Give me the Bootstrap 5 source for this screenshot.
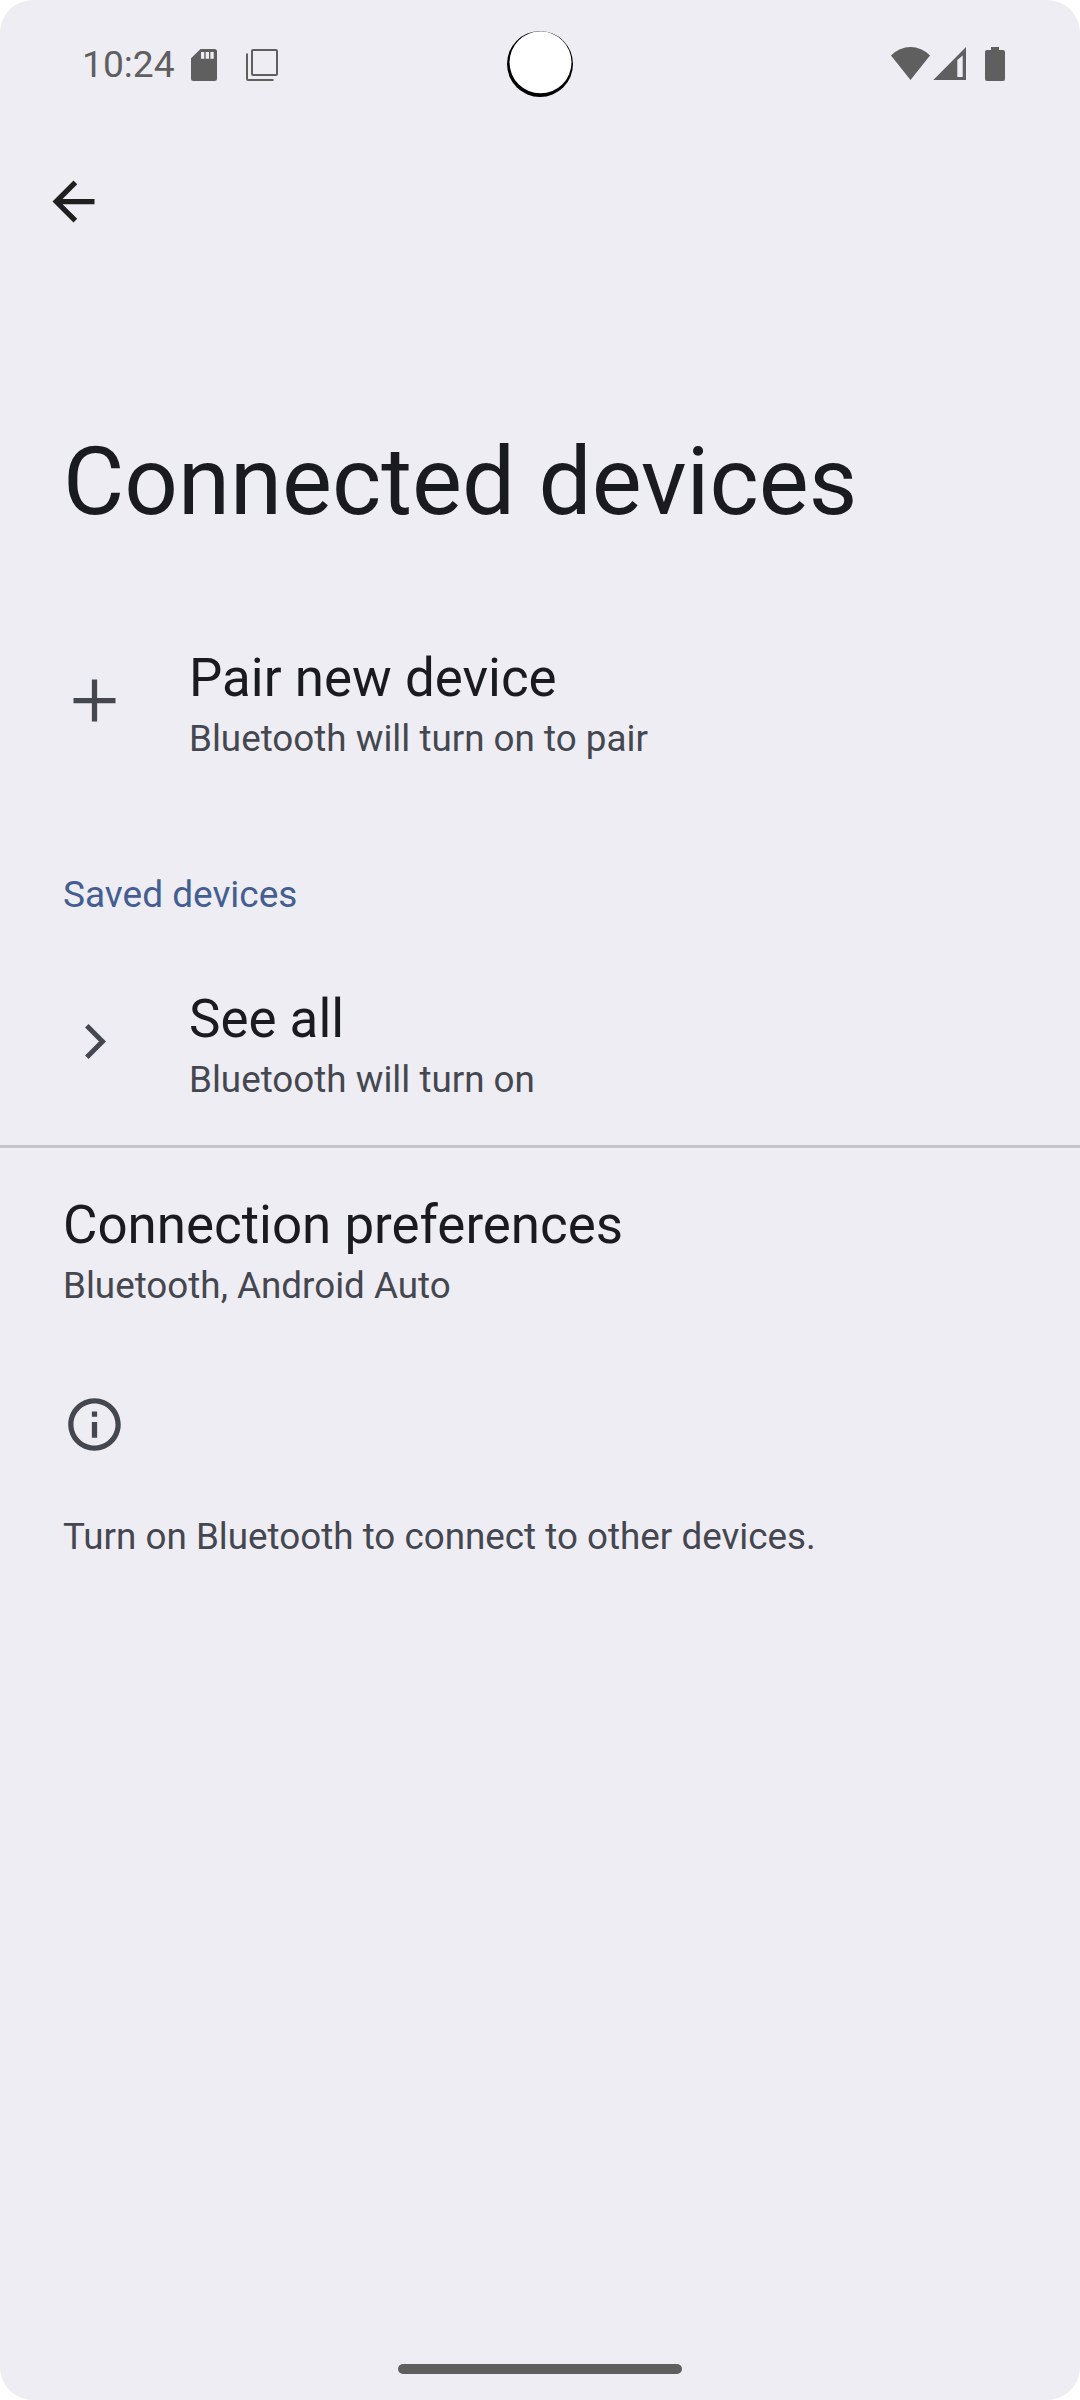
<!DOCTYPE html>
<html lang="en">
<head>
<meta charset="utf-8">
<meta name="viewport" content="width=device-width, initial-scale=1">
<title>Connected devices</title>
<link rel="stylesheet" href="https://cdn.jsdelivr.net/npm/bootstrap@5.3.0/dist/css/bootstrap.min.css">
<style>
  body { font-family: Roboto, "Liberation Sans", sans-serif; background: #fff; color: #1a1b20; }
  svg { display: block; flex: none; }
  .screen { width: 1080px; height: 2400px; background: #eeedf3; border-radius: 33px; }
  .status { height: 128px; color: #5f5f60; padding: 0 75px 0 82px; }
  .clock { font-size: 37.2px; line-height: 44px; margin-top: 42px; width: 109px; }
  .status-icons { padding-top: 46px; }
  .stack-icon { margin-left: 23px; }
  .camera { left: 506px; top: 30px; }
  .toolbar { height: 147px; padding-left: 42px; }
  .page-title { font-size: 94.2px; line-height: 111px; padding: 152px 63px 0; margin-bottom: 109px; }
  .pref { padding: 0 63px; height: 134px; }
  .pref-icon { width: 126px; padding-top: 22px; }
  .pref-title { font-size: 52.9px; line-height: 62px; margin-bottom: 8px; }
  .sub { font-size: 36.8px; line-height: 43px; color: #44474f; }
  .category { font-size: 37px; color: #445e91; padding: 0 63px; margin: 92px 0 72px; }
  .rule { height: 3px; background: #c5c6cd; margin: 23px 0 46px; }
  .footer-pref { padding: 65px 63px 0; color: #44474f; }
  .footer-pref .sub { margin-top: 59px; }
  .handle { width: 284px; height: 10px; background: #5f5f60; margin-bottom: 26px; }
</style>
</head>
<body>
<div class="screen d-flex flex-column position-relative overflow-hidden">
  <header class="status d-flex justify-content-between">
    <div class="d-flex">
      <div class="clock text-nowrap">10:24</div>
      <div class="status-icons d-flex">
        <!-- SD card -->
        <svg width="26" height="38" viewBox="0 0 26 38" fill="currentColor"><path fill-rule="evenodd" d="M9.500 3H23.500Q26 3 26 5.500V32.500Q26 35 23.500 35H2.500Q0 35 0 32.500V12.300ZM10 6V12.700H13.300V6ZM14.700 6V12.700H18V6ZM19.400 6V12.700H22.700V6Z"/></svg>
        <!-- Stacked squares -->
        <svg class="stack-icon" width="40" height="38" viewBox="0 0 40 38" fill="none" stroke="currentColor" stroke-width="2"><rect x="12" y="4" width="25" height="25" rx="1"/><path d="M7 7.500V33a1 1 0 0 0 1 1H33.500"/></svg>
      </div>
    </div>
    <div class="status-icons d-flex">
      <svg width="114" height="38" viewBox="891 46 114 38" fill="currentColor">
        <path d="M910.500 80 891 55.500Q899.500 47 910.500 47T930 55.500Z"/>
        <path fill-rule="evenodd" d="M966 47V80H933.300ZM957.300 60V77H962.700V55.500Z"/>
        <path d="M991 47H999V50H1003Q1005 50 1005 52V79Q1005 81 1003 81H987Q985 81 985 79V52Q985 50 987 50H991Z"/>
      </svg>
    </div>
  </header>
  <svg class="camera position-absolute" width="68" height="68" viewBox="506 30 68 68"><circle cx="540" cy="64" r="33"/><circle cx="540.500" cy="62.300" r="31" fill="#fff"/></svg>

  <nav class="toolbar d-flex align-items-center" aria-label="Toolbar">
    <svg width="63" height="63" viewBox="0 0 24 24" fill="#1f1f1f"><path d="M20 11H7.830l5.590-5.590L12 4l-8 8 8 8 1.410-1.410L7.830 13H20z"/></svg>
  </nav>

  <h1 class="page-title fw-normal text-nowrap">Connected devices</h1>

  <main>
    <div class="pref d-flex">
      <div class="pref-icon"><svg width="63" height="63" viewBox="0 0 24 24" fill="#44474f"><path d="M20 13H13v7H11V13H4V11H11V4h2v7h7z"/></svg></div>
      <div><div class="pref-title">Pair new device</div><div class="sub">Bluetooth will turn on to pair</div></div>
    </div>

    <h2 class="sub category fw-normal">Saved devices</h2>

    <div class="pref d-flex">
      <div class="pref-icon"><svg width="63" height="63" viewBox="0 0 63 63" fill="none" stroke="#44474f" stroke-width="4.900"><path d="M23.800 15.800 39.500 31.500 23.800 47.200"/></svg></div>
      <div><div class="pref-title">See all</div><div class="sub">Bluetooth will turn on</div></div>
    </div>

    <div class="rule"></div>

    <div class="pref"><div class="pref-title">Connection preferences</div><div class="sub">Bluetooth, Android Auto</div></div>

    <div class="footer-pref">
      <svg width="63" height="63" viewBox="0 0 24 24" fill="currentColor"><path d="M11 7h2v2h-2zm0 4h2v6h-2zm1-9C6.480 2 2 6.480 2 12s4.480 10 10 10 10-4.480 10-10S17.520 2 12 2zm0 18c-4.410 0-8-3.590-8-8s3.590-8 8-8 8 3.590 8 8-3.590 8-8 8z"/></svg>
      <div class="sub">Turn on Bluetooth to connect to other devices.</div>
    </div>
  </main>

  <div class="handle rounded-pill mt-auto mx-auto"></div>
</div>
<script src="https://cdn.jsdelivr.net/npm/bootstrap@5.3.0/dist/js/bootstrap.bundle.min.js"></script>
</body>
</html>
